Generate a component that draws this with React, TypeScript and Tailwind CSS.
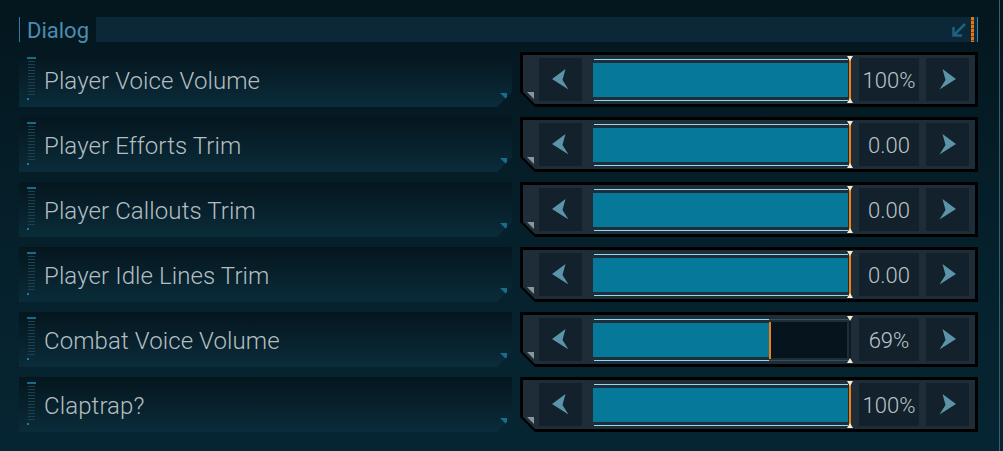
import React from "react";

type Setting = {
  label: string;
  value: string;
  pct: number;
};

const settings: Setting[] = [
  { label: "Player Voice Volume", value: "100%", pct: 100 },
  { label: "Player Efforts Trim", value: "0.00", pct: 100 },
  { label: "Player Callouts Trim", value: "0.00", pct: 100 },
  { label: "Player Idle Lines Trim", value: "0.00", pct: 100 },
  { label: "Combat Voice Volume", value: "69%", pct: 69 },
  { label: "Claptrap?", value: "100%", pct: 100 },
];

const Chevron = ({ dir }: { dir: "left" | "right" }) => (
  <svg width="17" height="21" viewBox="0 0 17 21" className={dir === "right" ? "scale-x-[-1]" : ""}>
    <polygon points="0,10 13.5,0 10.5,11 16.5,20.5" fill="#5b93a8" />
  </svg>
);

const ArrowButton = ({ dir }: { dir: "left" | "right" }) => (
  <div className="flex h-[43px] w-[43px] shrink-0 items-center justify-center bg-[#12212b]">
    <Chevron dir={dir} />
  </div>
);

const Track = ({ pct }: { pct: number }) => {
  const full = pct >= 100;
  const fillW = Math.round((255 * pct) / 100);
  return (
    <div className="relative h-[43px] w-[260px] shrink-0">
      {/* empty part */}
      {!full && (
        <>
          <div className="absolute top-[1px] right-[5px] h-px bg-[#34505c]" style={{ left: fillW }} />
          <div className="absolute bottom-0 right-[5px] h-px bg-[#34505c]" style={{ left: fillW }} />
          <div className="absolute top-[4px] bottom-[3px] right-[6px] bg-[#06151d]" style={{ left: fillW }} />
        </>
      )}
      {/* fill */}
      <div className="absolute top-[1px] left-[1px] h-px bg-[#8cdcf3]" style={{ width: fillW - 1 }} />
      <div className="absolute bottom-0 left-[1px] h-px bg-[#8cdcf3]" style={{ width: fillW - 1 }} />
      <div className="absolute top-[5px] bottom-[4px] left-0 bg-[#067899]" style={{ width: fillW }} />
      {/* marker */}
      {full ? (
        <div className="absolute top-[-1px] bottom-[-1px] left-[256px] w-[2px] bg-[#f07f10]" />
      ) : (
        <>
          <div className="absolute top-[4px] bottom-[2px] w-[2px] bg-[#f07f10]" style={{ left: fillW }} />
          <div className="absolute top-[-1px] bottom-[-1px] left-[256px] w-[2px] bg-[#0e1a22]" />
        </>
      )}
      {/* end triangles */}
      <svg className="absolute top-[-2px] left-[254px]" width="6" height="5" viewBox="0 0 6 5">
        <polygon points="0,0 6,0 3,5" fill="#f3ecd2" />
      </svg>
      <svg className="absolute bottom-[-2px] left-[254px]" width="6" height="5" viewBox="0 0 6 5">
        <polygon points="3,0 6,5 0,5" fill="#f3ecd2" />
      </svg>
    </div>
  );
};

const Row = ({ s }: { s: Setting }) => (
  <div className="flex h-[55px] items-start gap-[8px]">
    {/* label panel */}
    <div className="relative flex h-[55px] w-[493px] shrink-0 items-center bg-gradient-to-b from-[#05161e] to-[#0a2c3a] [clip-path:polygon(0_0,100%_0,100%_calc(100%-15px),calc(100%-15px)_100%,0_100%)]">
      <div className="absolute left-[8px] top-[5px] h-[2px] w-[9px] bg-[#1a6a86]" />
      <div className="absolute left-[9px] top-[9px] h-[36px] w-[7px] bg-[repeating-linear-gradient(to_bottom,#1c4252_0_1px,transparent_1px_3px)]" />
      <div className="absolute left-[8px] top-[46px] h-[2px] w-[2px] bg-[#1a7fa0]" />
      <svg className="absolute right-[5px] bottom-[7px]" width="7" height="7" viewBox="0 0 7 7">
        <polygon points="0,0 7,0 7,7" fill="#1b6c8c" />
      </svg>
      <span className="pl-[25px] pt-[3px] text-[24px] font-light leading-none tracking-[0.1px] text-[#b4bec2] [font-family:Roboto,'Liberation_Sans',sans-serif]">
        {s.label}
      </span>
    </div>
    {/* slider panel */}
    <div className="h-[55px] w-[458px] shrink-0 bg-black p-[3px] [clip-path:polygon(0_0,100%_0,100%_100%,15px_100%,0_calc(100%-15px))]">
      <div className="relative flex h-full items-center bg-[#1f2d38] pl-[16px] pr-[6px] [clip-path:polygon(0_0,100%_0,100%_100%,12px_100%,0_calc(100%-12px))]">
        <svg className="absolute left-[4px] bottom-[5px]" width="7" height="7" viewBox="0 0 7 7">
          <polygon points="0,0 7,0 7,7" fill="#8a969c" />
        </svg>
        <ArrowButton dir="left" />
        <div className="ml-[11px]">
          <Track pct={s.pct} />
        </div>
        <div className="ml-[6px] flex h-[43px] w-[60px] shrink-0 items-center justify-center bg-[#12212b] pt-[2px] text-[22px] font-light leading-none text-[#bcc6ca] [font-family:Roboto,'Liberation_Sans',sans-serif]">
          {s.value}
        </div>
        <div className="ml-[7px]">
          <ArrowButton dir="right" />
        </div>
      </div>
    </div>
  </div>
);

export default function App() {
  return (
    <div className="relative h-[451px] w-[1003px] overflow-hidden bg-gradient-to-b from-[#04161e] via-[#05202b] to-[#062532]">
      <div className="absolute top-0 bottom-0 left-[999px] w-px bg-[#3f5c68]" />
      <div className="flex flex-col gap-[10px] pl-[19px] pt-[17px]">
        {/* header */}
        <div className="flex h-[25px] w-[959px] items-stretch">
          <div className="w-px bg-[#2e7ea0]" />
          <div className="flex w-[76px] items-center pl-[7px] pt-[2px] text-[22px] leading-none text-[#4b8db0] [font-family:Roboto,'Liberation_Sans',sans-serif]">
            Dialog
          </div>
          <div className="flex flex-1 items-center justify-end bg-[#0b2738]">
            <svg width="16" height="16" viewBox="0 0 16 16" className="mr-[4px]">
              <path d="M14 2 L3.5 12.5 M2.5 5 V13.5 H11" stroke="#1e6282" strokeWidth="2.5" fill="none" />
            </svg>
            <div className="h-full w-[3px] bg-[repeating-linear-gradient(to_bottom,#e07a16_0_3px,#8a4a10_3px_4px)]" />
            <div className="ml-[3px] h-full w-px bg-[#2a8ab0]" />
          </div>
        </div>
        {settings.map((s) => (
          <Row key={s.label} s={s} />
        ))}
      </div>
    </div>
  );
}
